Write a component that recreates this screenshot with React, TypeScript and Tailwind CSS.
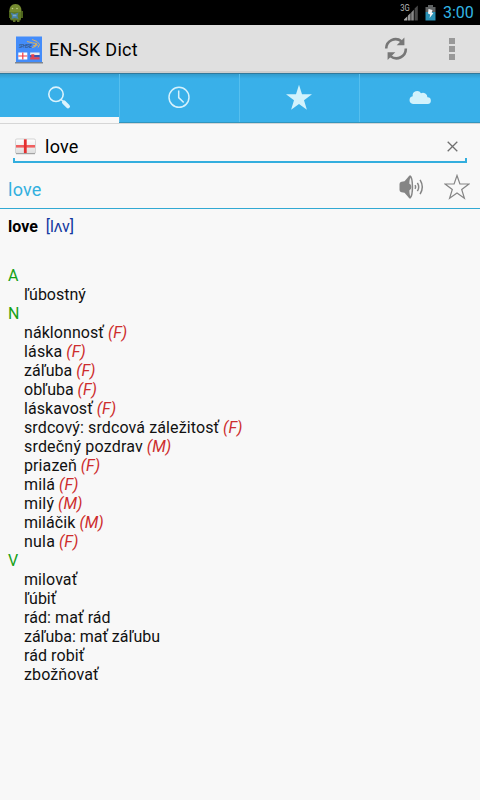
import React from "react";

type Entry = { text: string; gender?: string; spacing?: string };
type Group = { label: string; entries: Entry[] };

const groups: Group[] = [
  { label: "A", entries: [{ text: "ľúbostný" }] },
  {
    label: "N",
    entries: [
      { text: "náklonnosť", gender: "F", spacing: "tracking-[0.07px]" },
      { text: "láska", gender: "F", spacing: "tracking-[0.15px]" },
      { text: "záľuba", gender: "F" },
      { text: "obľuba", gender: "F" },
      { text: "láskavosť", gender: "F", spacing: "tracking-[0.08px]" },
      { text: "srdcový: srdcová záležitosť", gender: "F", spacing: "tracking-[0.11px]" },
      { text: "srdečný pozdrav", gender: "M", spacing: "tracking-[0.19px]" },
      { text: "priazeň", gender: "F", spacing: "tracking-[0.1px]" },
      { text: "milá", gender: "F", spacing: "tracking-[0.15px]" },
      { text: "milý", gender: "M", spacing: "tracking-[0.2px]" },
      { text: "miláčik", gender: "M", spacing: "tracking-[0.08px]" },
      { text: "nula", gender: "F", spacing: "tracking-[0.2px]" },
    ],
  },
  {
    label: "V",
    entries: [
      { text: "milovať", spacing: "tracking-[0.08px]" },
      { text: "ľúbiť" },
      { text: "rád: mať rád", spacing: "tracking-[0.08px]" },
      { text: "záľuba: mať záľubu", spacing: "tracking-[-0.04px]" },
      { text: "rád robiť", spacing: "tracking-[0.08px]" },
      { text: "zbožňovať", spacing: "tracking-[0.12px]" },
    ],
  },
];

function StatusBar() {
  return (
    <div className="flex h-[25px] items-center bg-black pl-2 pr-[6px]">
      <svg width="16" height="20" viewBox="0 0 16 20">
        <path d="M1.2 8.5Q1.400 1 7.500 1Q13.600 1 13.600 8.500L13 10H2Z" fill="#758b30" />
        <path d="M2 9H13V16Q13 17.500 11.500 17.500H4Q2 17.500 2 15.500Z" fill="#5f7926" />
        <path d="M13 8h2v7h-2zM1 9h1.500v6H1z" fill="#4c631c" />
        <path d="M5 16h2.500v3H5zM9 16h2.500v3H9z" fill="#61752b" />
        <circle cx="4.500" cy="5.500" r=".8" fill="#c2cd8a" />
        <circle cx="9" cy="5.500" r=".8" fill="#c2cd8a" />
        <path d="M2.500 9.500l4 1.500L10.500 9.500l-1 3.500 1 3-4-1L3.500 16l.6-3z" fill="#4781a8" />
        <path d="M4.800 11.700h3.600v1.600H4.800z" fill="#7daac4" />
      </svg>
      <svg className="ml-auto" width="20" height="20" viewBox="0 0 20 20">
        <text x="1.200" y="8" fontSize="8.500" textLength="9.500" lengthAdjust="spacingAndGlyphs" fontFamily="Roboto, sans-serif" fill="#bbb">3G</text>
        <path d="M5 17.500V16.600L8.400 13.200V17.500Z" fill="#aaa" />
        <path d="M9 17.500V12.600L11.600 10V17.500Z" fill="#999" />
        <path d="M12.200 17.500V9.400L14.800 6.800V17.500Z" fill="#888" />
        <path d="M15.600 17.500V5.600L18.800 2.400V17.500Z" fill="#484848" />
      </svg>
      <svg className="ml-[6px]" width="11" height="18" viewBox="0 0 11 18">
        <path d="M3 1h5v2h2.500v5H.5V3H3z" fill="#606364" />
        <path d="M.5 8h10v8.500H.5z" fill="#2b91b5" />
        <path d="M3.500 5L7.500 6 6.700 8.500 8.300 9.200 4.600 14 5.200 10.600 3 9.500Z" fill="#f5f5f5" />
      </svg>
      <span className="ml-[7px] w-[31px] whitespace-nowrap text-[16px] leading-[25px] text-[#33b5e5]">3:00</span>
    </div>
  );
}

function AppLogo() {
  return (
    <svg className="mt-[3px]" width="28" height="28" viewBox="0 0 28 28">
      <path d="M1 .5h26v25.800H1z" fill="#438cfa" />
      <path d="M0 26.200h28v1.200H0z" fill="#69737e" />
      <text x="4" y="11.800" fontSize="4.500" fontStyle="italic" textLength="13" fontFamily="Roboto, sans-serif" fill="#34517b">SPHERE</text>
      <path d="M12 5.500q6 1.800 10 2l-2 1 2.500.5-4 .7 2 .8-3.500 1M17 3.500l5 2 2.500 3-1.500 3" stroke="#d8b164" strokeWidth="1" fill="none" />
      <path d="M3.300 16.500h9v7h-9z" fill="#fff" />
      <path d="M7.800 16.500v7M3.300 20h9" stroke="#f23c46" strokeWidth="1.200" />
      <path d="M15.200 16.500h9.400V19h-9.400z" fill="#eee" />
      <path d="M15.200 19h9.400v2.200h-9.400z" fill="#3a55b2" />
      <path d="M15.200 21.200h9.400v2.300h-9.400z" fill="#e64550" />
      <path d="M16.300 18.300h3v2.400l-1.500 1.400-1.500-1.400z" fill="#e83e4b" />
    </svg>
  );
}

function ActionBar() {
  return (
    <div className="flex h-12 items-center border-b-2 border-[#cecece] bg-[#e0e0e0] pl-[15px] pr-[25px]">
      <AppLogo />
      <h1 className="ml-[6px] mt-[3px] whitespace-nowrap text-[18px] leading-6 tracking-[0.3px] text-black">EN-SK Dict</h1>
      <svg className="ml-auto mt-[2px]" width="24" height="24" viewBox="0 0 24 24">
        <path d="M2.200 11.500A9.400 9.400 0 0 1 17.400 4.200M21.800 11.500A9.400 9.400 0 0 1 6.600 19.300" stroke="#777" strokeWidth="2.600" fill="none" />
        <path d="M20.400 .5V8.200H12.700ZM3.600 23V15.300H11.300Z" fill="#777" />
      </svg>
      <div className="ml-[41px] mt-[2px] flex flex-col gap-[2px]">
        <i className="size-[6px] bg-[#999]" />
        <i className="size-[6px] bg-[#999]" />
        <i className="size-[6px] bg-[#999]" />
      </div>
    </div>
  );
}

function Tabs() {
  const icons = [
    <svg key="s" width="24" height="24" viewBox="0 0 24 24">
      <circle cx="9" cy="8.300" r="7.200" fill="none" stroke="#dcf3fc" strokeWidth="1.600" />
      <path d="M13.900 13.200l2.300 2.300" stroke="#dcf3fc" strokeWidth="1.500" />
      <path d="M17 16.300l4 4" stroke="#dcf3fc" strokeWidth="4" strokeLinecap="round" />
    </svg>,
    <svg key="c" width="24" height="24" viewBox="0 0 24 24">
      <circle cx="12" cy="11.300" r="10" fill="none" stroke="#d5f1fc" strokeWidth="1.500" />
      <path d="M11.700 4.600v7l5 4.900" fill="none" stroke="#d5f1fc" strokeWidth="1.500" />
    </svg>,
    <svg key="f" width="28" height="28" viewBox="0 0 28 28">
      <path d="M14 .7L17 10.300h10l-8 6 2.900 9.400-7.900-5.700-7.900 5.700L9 16.300l-8-6h10z" fill="#d2f2fc" />
    </svg>,
    <svg key="w" width="26" height="16" viewBox="0 0 26 16">
      <path d="M5 13.900a3.900 3.900 0 0 1-.3-7.700A4.500 4.500 0 0 1 13 3.200a4.500 4.500 0 0 1 6.400 4.100 3.300 3.300 0 0 1 .3 6.600z" fill="#d2f2fc" />
    </svg>,
  ];
  return (
    <nav className="grid h-[50px] grid-cols-4 border-b border-[#3295bd] border-t border-t-[#31799c] bg-linear-to-b from-[#329bcc] via-[#39b0e9] via-10% to-[#39b0e9]">
      {icons.map((icon, i) => (
        <div key={i} className={i === 3 ? "flex flex-col" : "flex flex-col border-r border-[#56bfee]"}>
          <div className={i === 3 ? "flex h-[43px] items-center justify-center pl-[2px] pt-[5px]" : "flex h-[43px] items-center justify-center pr-px pt-[5px]"}>{icon}</div>
          {i === 0 && <div className="mb-[-1px] h-[6px] bg-[#f8f8f8]" />}
        </div>
      ))}
    </nav>
  );
}

function SearchField() {
  return (
    <div className="h-[40px] border-t border-[#d6d6d6] px-[13px] pt-px">
      <div className="flex h-[38px] flex-col">
        <div className="flex h-[33px] items-center pl-[2px] pt-[10px]">
          <svg width="21" height="17" viewBox="0 0 21 17">
            <defs>
              <linearGradient id="flag" x2="0" y2="1">
                <stop stopColor="#fff" />
                <stop offset="1" stopColor="#ddd" />
              </linearGradient>
            </defs>
            <rect x=".4" y="1" width="20.200" height="14.500" rx="1.500" fill="url(#flag)" stroke="#c4c4c4" strokeWidth=".7" />
            <path d="M1 8.300h19" stroke="#f06060" strokeWidth="2.600" />
            <path d="M10.300 1.300v14" stroke="#e43030" strokeWidth="2.800" />
            <path d="M1 15.700h19" stroke="#999" strokeWidth="1" />
          </svg>
          <span className="ml-[9px] text-[18px] leading-5 tracking-[0.25px] text-black">love</span>
          <svg className="ml-auto mr-[9px]" width="11" height="11" viewBox="0 0 11 11">
            <path d="M.7 .7l9.600 9.600M10.300 .7L.7 10.300" stroke="#707070" strokeWidth="1.300" />
          </svg>
        </div>
        <div className="h-[5px] border-x-2 border-b-2 border-[#33aede]" />
      </div>
    </div>
  );
}

function WordHeader() {
  return (
    <div className="flex h-[46px] items-center border-b border-[#32a9d3] pl-2 pr-[10px] pt-[4px]">
      <h2 className="mt-[4px] text-[18px] leading-5 tracking-[0.25px] text-[#33b0df]">love</h2>
      <svg className="ml-auto mt-[-2px]" width="26" height="26" viewBox="0 0 26 26">
        <path d="M.5 10Q.5 8 2.500 7.700L5.500 7.300 9 3.200Q10.200 1.300 11.300 1.300Q14.200 3 14.200 13T11.300 24.700Q10.200 24.700 9 22.800L5.500 18.700 2.500 18.300Q.5 18 .5 16Z" fill="#858585" />
        <path d="M11.400 3.500Q12.700 6 12.700 13T11.400 22.500Q10.200 20 10.200 13T11.400 3.500Z" fill="#f0f0f0" />
        <path d="M10 9.500q2.400.5 2.400 3.500T10 16.500z" fill="#858585" />
        <path d="M16 11.200q1.200 1.800 0 3.600M18.400 8.800q2.600 4.200 0 8.400M21.100 5.800q4.400 7.200 0 14.400" fill="none" stroke="#858585" strokeWidth="1.500" />
      </svg>
      <svg className="ml-[19px] mt-[-2px]" width="26" height="26" viewBox="0 0 26 26">
        <path d="M13 1.500L15.900 10h9l-7.200 5.500 2.700 8.700-7.400-5.200-7.400 5.200 2.700-8.700L1.100 10h9z" fill="none" stroke="#858585" strokeWidth="1.200" />
      </svg>
    </div>
  );
}

export default function App() {
  return (
    <div className="h-[800px] w-[480px] overflow-hidden bg-[#f8f8f8] font-[Roboto,'Noto_Sans',sans-serif]">
      <StatusBar />
      <ActionBar />
      <Tabs />
      <SearchField />
      <WordHeader />
      <main className="px-2 pt-2 text-[16px] leading-[19px] text-[#111]">
        <p className="flex h-[49px] gap-2">
          <b className="text-black">love</b>
          <span className="text-[#1238a0]">[lʌv]</span>
        </p>
        {groups.map((group) => (
          <section key={group.label}>
            <h3 className="text-[#16a016]">{group.label}</h3>
            <ul className="pl-4">
              {group.entries.map((entry) => (
                <li key={entry.text} className="h-[19px] whitespace-nowrap">
                  <span className={entry.spacing}>{entry.text}</span>
                  {entry.gender && <em className="text-[#cd2d2d]"> ({entry.gender})</em>}
                </li>
              ))}
            </ul>
          </section>
        ))}
      </main>
    </div>
  );
}
